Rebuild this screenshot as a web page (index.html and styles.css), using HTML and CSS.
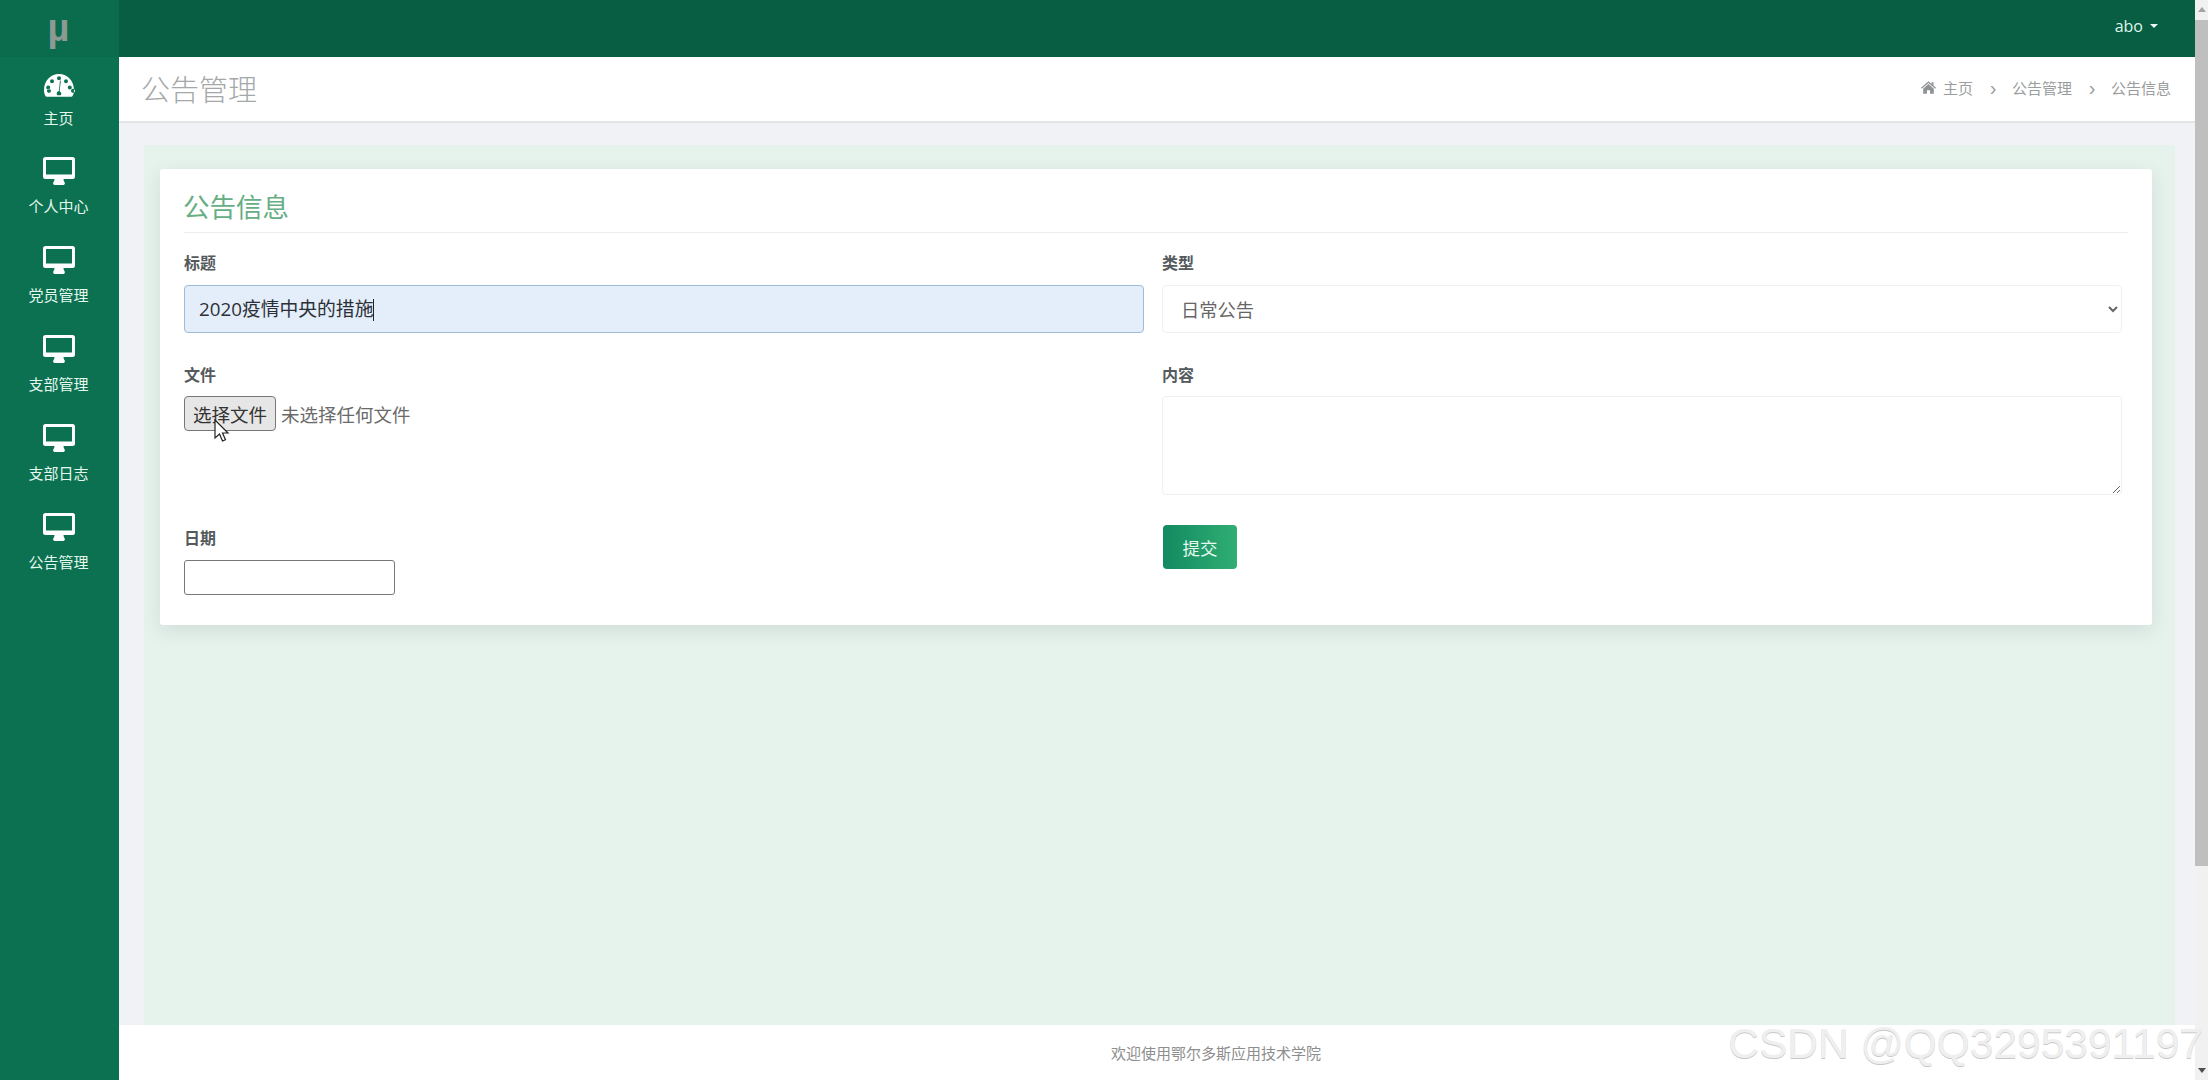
FILE: index.html
```html
<!DOCTYPE html>
<html lang="zh-CN">

<head>
    <meta charset="UTF-8">
    <title>公告管理</title>
    <link rel="stylesheet" href="styles.css">
</head>

<body>

    <svg class="icon-defs" width="0" height="0">
        <symbol id="icon-desktop" viewBox="0 0 32 28">
            <path fill-rule="evenodd" d="M2.5 0h27A2.5 2.5 0 0 1 32 2.500v17a2.500 2.500 0 0 1-2.500 2.500H20.500c0 1.500.6 2.600 1.200 3.600.3.500.3 2.400-1.200 2.400h-9c-1.500 0-1.500-1.900-1.200-2.400.6-1 1.200-2.100 1.200-3.600H2.500A2.500 2.500 0 0 1 0 19.500v-17A2.500 2.500 0 0 1 2.500 0zM3 3v14.500h26V3z" />
        </symbol>
    </svg>

    <!-- Left Section: Menu -->
    <div class="sidebar">
        <div class="logo">µ</div>
        <a class="menu-item">
            <svg class="menu-icon" viewBox="0 0 32 24">
                <path fill-rule="evenodd" d="M16 1C7.200 1 1 8 1 17c0 2.500.5 4.300 1.300 5.800.3.600.9.900 1.500.900h24.400c.6 0 1.200-.3 1.500-.9.800-1.500 1.300-3.300 1.300-5.800C31 8 24.800 1 16 1zM16 3.200a2 2 0 1 1 0 4 2 2 0 0 1 0-4zM9 6.200a2 2 0 1 1 0 4 2 2 0 0 1 0-4zM23 6.200a2 2 0 1 1 0 4 2 2 0 0 1 0-4zM5.200 12.500a2 2 0 1 1 0 4 2 2 0 0 1 0-4zM26.800 12.500a2 2 0 1 1 0 4 2 2 0 0 1 0-4zM4 17.800a2 2 0 1 1 0 .1zM28 17.800a2 2 0 1 1 0 .1zM17 7.500l.9.300-1.300 10.400c1 .5 1.700 1.500 1.700 2.500 0 .6-.2 1.100-.5 1.500h-3.600c-.3-.4-.5-.9-.5-1.500 0-1.300 1-2.400 2.200-2.700z" />
            </svg>
            <span>主页</span>
        </a>
        <a class="menu-item"><svg class="menu-icon"><use href="#icon-desktop" /></svg><span>个人中心</span></a>
        <a class="menu-item"><svg class="menu-icon"><use href="#icon-desktop" /></svg><span>党员管理</span></a>
        <a class="menu-item"><svg class="menu-icon"><use href="#icon-desktop" /></svg><span>支部管理</span></a>
        <a class="menu-item"><svg class="menu-icon"><use href="#icon-desktop" /></svg><span>支部日志</span></a>
        <a class="menu-item"><svg class="menu-icon"><use href="#icon-desktop" /></svg><span>公告管理</span></a>
    </div>

    <!-- Right Section: Page -->
    <div class="main">
        <div class="topbar">
            <span class="user">abo</span>
            <span class="user-caret"></span>
        </div>

        <div class="page-head">
            <div class="page-title">公告管理</div>
            <div class="crumbs">
                <svg class="crumb-home" viewBox="0 0 24 20">
                    <path d="M12 0l5 4.300V1.500h3v5.400l4 3.500-1.300 1.400L12 2.700 1.300 11.800 0 10.400zM12 4.500l8.500 7.300V20h-6v-5.500h-5V20h-6v-8.200z" />
                </svg>
                <span>主页</span>
                <span class="crumb-sep">›</span>
                <span>公告管理</span>
                <span class="crumb-sep">›</span>
                <span>公告信息</span>
            </div>
        </div>

        <div class="content">
            <div class="content-inner">
                <div class="card">
                    <h2 class="card-title">公告信息</h2>
                    <form class="form-grid">
                        <div class="form-col">
                            <div class="form-group group-title">
                                <label>标题</label>
                                <div class="text-filled">2020疫情中央的措施<i class="caret"></i></div>
                            </div>
                            <div class="form-group group-file">
                                <label>文件</label>
                                <div class="file-row">
                                    <button type="button" class="file-btn">选择文件</button>
                                    <span class="file-name">未选择任何文件</span>
                                </div>
                            </div>
                            <div class="form-group">
                                <label>日期</label>
                                <input type="text" class="date-input">
                            </div>
                        </div>
                        <div class="form-col">
                            <div class="form-group group-title">
                                <label>类型</label>
                                <select class="plain-field type-select">
                                    <option>日常公告</option>
                                </select>
                            </div>
                            <div class="form-group group-content">
                                <label>内容</label>
                                <textarea class="plain-field content-text"></textarea>
                            </div>
                            <button type="button" class="submit-btn">提交</button>
                        </div>
                    </form>
                </div>
            </div>
        </div>

        <div class="footer">欢迎使用鄂尔多斯应用技术学院</div>
    </div>

    <div class="scrollbar">
        <div class="scroll-up"></div>
        <div class="scroll-thumb"></div>
        <div class="scroll-down"></div>
    </div>

    <!-- Things lying over the page -->
    <svg class="pointer" viewBox="0 0 16 24">
        <path d="M1 1v18l4.500-4 3 7 3-1.300-3-6.700H14z" fill="#fff" stroke="#222" stroke-width="1.200" />
    </svg>
    <div class="watermark">CSDN @QQ3295391197</div>

</body>

</html>
```

FILE: styles.css
```css
* {
    box-sizing: border-box;
}

html,
body {
    height: 100%;
}

body {
    font-family: "Open Sans", "Noto Sans CJK SC", sans-serif;
    margin: 0;
    display: flex;
    overflow: hidden;
    position: relative;
    background-color: #fff;
    color: #333;
}

.icon-defs {
    position: absolute;
}

/* Sidebar */
.sidebar {
    width: 119px;
    flex-shrink: 0;
    background-color: #0c7150;
    color: #e4f8ef;
}

.logo {
    height: 57px;
    padding-right: 2px;
    background-color: #0b6c4d;
    color: #8c9a94;
    font-family: "Liberation Sans", sans-serif;
    font-size: 38px;
    font-weight: 700;
    line-height: 57px;
    text-align: center;
}

.menu-item {
    height: 89px;
    display: flex;
    flex-direction: column;
    align-items: center;
    padding: 15px 2px 0 0;
    font-size: 15px;
    line-height: 20px;
}

.menu-icon {
    width: 32px;
    height: 28px;
    fill: #fff;
    margin-bottom: 11px;
}

.menu-item:first-of-type {
    height: 85px;
    padding-top: 16px;
}

.menu-item:first-of-type .menu-icon {
    height: 24px;
    margin-bottom: 11px;
}

/* Main column */
.main {
    flex: 1;
    min-width: 0;
    display: flex;
    flex-direction: column;
}

.topbar {
    height: 57px;
    flex-shrink: 0;
    background-color: #075e43;
    color: #dff5ec;
    display: flex;
    align-items: center;
    justify-content: flex-end;
    padding: 0 37px 5px 0;
    font-size: 16px;
}

.user-caret {
    margin-left: 7px;
    border-top: 4px solid #eef8f4;
    border-left: 4px solid transparent;
    border-right: 4px solid transparent;
}

.page-head {
    height: 66px;
    flex-shrink: 0;
    background-color: #fff;
    border-bottom: 2px solid #e3e5e7;
    display: flex;
    align-items: center;
    justify-content: space-between;
    padding: 0 24px 3px 22px;
}

.page-title {
    font-size: 29px;
    font-weight: 300;
    color: #a4a8a9;
}

.crumbs {
    display: flex;
    align-items: center;
    font-size: 15px;
    color: #9a9d9e;
}

.crumb-home {
    width: 15px;
    height: 13px;
    fill: #8f9394;
    margin-right: 7px;
}

.crumb-sep {
    width: 8px;
    text-align: center;
    font-family: "Liberation Sans", sans-serif;
    font-size: 20px;
    line-height: 16px;
    margin: 0 15px 0 16px;
}

.content {
    flex: 1;
    min-height: 0;
    background-color: #f0f2f5;
    padding: 22px 20px 0 25px;
}

.content-inner {
    height: 100%;
    background-color: #e6f2ec;
    padding: 24px 23px 0 16px;
}

.card {
    height: 456px;
    background-color: #fff;
    border-radius: 3px;
    padding: 19px 24px 0;
    box-shadow: 0 6px 18px rgba(60, 90, 90, 0.13);
}

.card-title {
    margin: 0 0 20px;
    padding-bottom: 6px;
    border-bottom: 1px solid #eceeee;
    font-size: 26.500px;
    font-weight: 400;
    line-height: 38px;
    color: #66ae84;
    text-indent: -1px;
}

.form-grid {
    display: grid;
    grid-template-columns: 960px 960px;
    column-gap: 18px;
}

.form-group label {
    display: block;
    height: 20px;
    margin-bottom: 12px;
    font-size: 16px;
    line-height: 20px;
    font-weight: 600;
    color: #555a5d;
}

.group-title {
    height: 112px;
}

.group-file {
    height: 163px;
}

.group-content {
    height: 159px;
}

.group-file label,
.group-content label {
    margin-bottom: 11px;
}

.text-filled {
    height: 48px;
    padding-left: 14px;
    background-color: #e4eefa;
    border: 1px solid #9cbcd6;
    border-radius: 4px;
    font-size: 18.800px;
    line-height: 46px;
    color: #2c3036;
}

.caret {
    display: inline-block;
    width: 1px;
    height: 22px;
    vertical-align: -5px;
    background-color: #222;
}

.file-row {
    display: flex;
    align-items: center;
}

.file-btn {
    width: 92px;
    height: 35px;
    padding: 0;
    background-color: #e6e6e6;
    border: 1px solid #777;
    border-radius: 4px;
    font: inherit;
    font-size: 18.500px;
    color: #333;
}

.file-name {
    margin-left: 5px;
    font-size: 18.500px;
    color: #6a6a6a;
}

.date-input {
    display: block;
    width: 211px;
    height: 35px;
    border: 1px solid #777;
    border-radius: 3px;
    background-color: #fff;
}

.plain-field {
    display: block;
    width: 960px;
    background-color: #fff;
    border: 1px solid #f0f0f0;
    border-radius: 4px;
    font-family: inherit;
    color: #666;
}

.type-select {
    height: 48px;
    padding-left: 14px;
    font-size: 18.300px;
}

.content-text {
    height: 99px;
}

.submit-btn {
    width: 74px;
    height: 44px;
    margin-top: 1px;
    margin-left: 1px;
    padding: 0;
    border: none;
    border-radius: 4px;
    background: linear-gradient(to right, #138a60, #30ae74);
    color: #e4f8ef;
    font: inherit;
    font-size: 17.500px;
}

.footer {
    height: 55px;
    flex-shrink: 0;
    background-color: #fff;
    padding: 18px 0 0 118px;
    text-align: center;
    font-size: 15px;
    line-height: 20px;
    color: #8e8e8e;
}

/* Scrollbar */
.scrollbar {
    width: 13px;
    flex-shrink: 0;
    display: flex;
    flex-direction: column;
    background-color: #f1f1f1;
}

.scroll-up,
.scroll-down {
    height: 20px;
    position: relative;
}

.scroll-up::after,
.scroll-down::after {
    content: "";
    position: absolute;
    left: 3px;
    border-left: 4px solid transparent;
    border-right: 4px solid transparent;
}

.scroll-up::after {
    top: 7px;
    border-bottom: 5px solid #a3a3a3;
}

.scroll-down {
    margin-top: auto;
}

.scroll-down::after {
    bottom: 7px;
    border-top: 5px solid #505050;
}

.scroll-thumb {
    height: 846px;
    background-color: #bfbfbf;
}

/* Overlays */
.pointer {
    position: absolute;
    left: 214px;
    top: 419px;
    width: 16px;
    height: 24px;
}

.watermark {
    position: absolute;
    right: 5px;
    top: 1020px;
    font-family: "Liberation Sans", sans-serif;
    font-size: 42.500px;
    line-height: 48px;
    white-space: nowrap;
    color: #efefef;
    text-shadow: 0 1px 0 #c8c8c8;
}
```
